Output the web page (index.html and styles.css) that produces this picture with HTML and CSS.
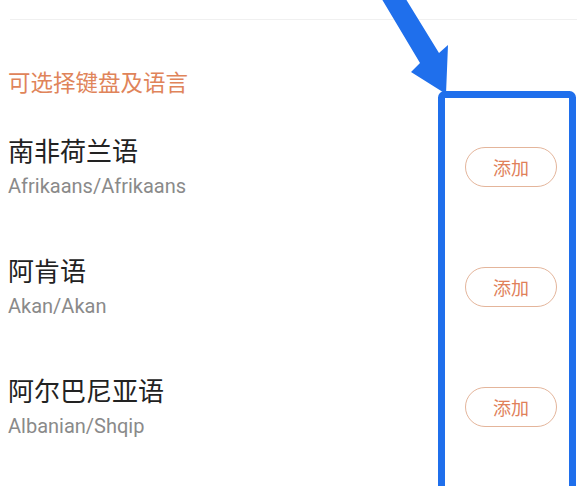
FILE: index.html
```html
<!DOCTYPE html>
<html lang="zh-CN">
<head>
  <meta charset="UTF-8" />
  <meta name="viewport" content="width=device-width, initial-scale=1.0"/>
  <title>键盘及语言</title>
  <link rel="stylesheet" href="styles.css">
</head>
<body>
  <div class="page">
    <div class="divider"></div>

    <div class="section-title">可选择键盘及语言</div>

    <div class="lang-list">
      <div class="lang-row">
        <div class="lang-info">
          <div class="lang-name">南非荷兰语</div>
          <div class="lang-sub">Afrikaans/Afrikaans</div>
        </div>
        <button class="add-btn">添加</button>
      </div>
      <div class="lang-row">
        <div class="lang-info">
          <div class="lang-name">阿肯语</div>
          <div class="lang-sub">Akan/Akan</div>
        </div>
        <button class="add-btn">添加</button>
      </div>
      <div class="lang-row">
        <div class="lang-info">
          <div class="lang-name">阿尔巴尼亚语</div>
          <div class="lang-sub">Albanian/Shqip</div>
        </div>
        <button class="add-btn">添加</button>
      </div>
    </div>
  </div>

  <!-- annotation: arrow + highlight box -->
  <svg class="overlay" width="577" height="486" viewBox="0 0 577 486">
    <polygon class="mark" points="380,-4 404,-4 439,53 448,45 446,94 411,72 420,63"/>
    <rect class="mark-box" x="441.5" y="94.5" width="131" height="430" rx="3"/>
  </svg>
</body>
</html>
```

FILE: styles.css
```css
* {
  box-sizing: border-box;
}

html, body {
  margin: 0;
  height: 100%;
  overflow: hidden;
}

body {
  background: #ffffff;
  font-family: 'Roboto', 'Noto Sans CJK SC', sans-serif;
  color: #222;
  position: relative;
}

.page {
  padding: 19px 20px 0 8px;
}

.divider {
  height: 1px;
  margin-left: 2px;
  margin-right: -20px;
  background: #f0f0f0;
}

.section-title {
  margin-top: 46px;
  font-family: 'Noto Sans CJK SC', sans-serif;
  font-size: 22.5px;
  line-height: 30px;
  color: #e0845a;
}

.lang-list {
  margin-top: 12px;
}

.lang-row {
  height: 120px;
  display: flex;
  align-items: center;
  justify-content: space-between;
}

.lang-info {
  padding-bottom: 3px;
}

.lang-name {
  font-family: 'Noto Sans CJK SC', sans-serif;
  font-size: 26px;
  line-height: 32px;
  color: #222;
}

.lang-sub {
  margin-top: 7px;
  font-size: 20px;
  line-height: 26px;
  color: #8a8a8a;
}

.add-btn {
  width: 92px;
  height: 40px;
  border: 1.5px solid #e4b59b;
  border-radius: 20px;
  background: #fff;
  color: #e0805a;
  font-family: 'Noto Sans CJK SC', sans-serif;
  font-size: 18px;
  padding: 0;
  margin-top: -2px;
  cursor: pointer;
}

.overlay {
  position: absolute;
  top: 0;
  left: 0;
  pointer-events: none;
}

.mark {
  fill: #1f6fec;
}

.mark-box {
  fill: none;
  stroke: #1f6fec;
  stroke-width: 7;
}
```
